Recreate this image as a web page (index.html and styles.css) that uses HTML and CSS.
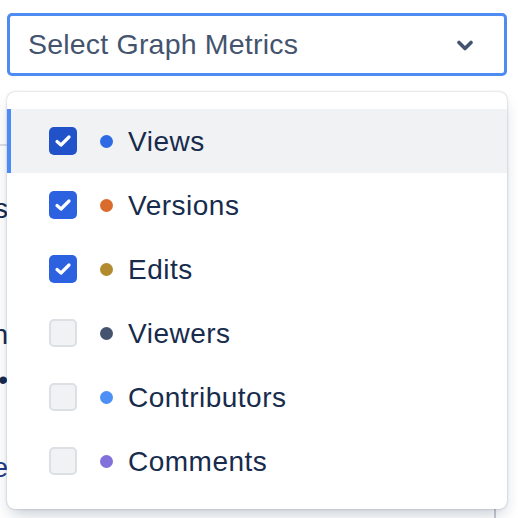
FILE: index.html
```html
<!DOCTYPE html>
<html>
<head>
<meta charset="utf-8">
<link rel="stylesheet" href="styles.css">
</head>
<body>
<div class="page">
  <div class="select">
    <span class="placeholder">Select Graph Metrics</span>
    <svg class="chevron" width="16" height="12" viewBox="0 0 16 12"><path d="M2 2.5 L8 8.5 L14 2.5" fill="none" stroke="#44546f" stroke-width="3.6" stroke-linecap="round" stroke-linejoin="round"/></svg>
  </div>

  <div class="backdrop">
    <div class="bd-head"></div>
    <div class="peek p1"><span>Statistics</span></div>
    <div class="peek p2"><span>Contents summary of con</span></div>
    <div class="peek p3"><span>•</span></div>
    <div class="peek p4"><span>Title</span></div>
  </div>

  <div class="menu">
    <div class="row active">
      <span class="cb on dark"><svg width="18" height="14" viewBox="0 0 18 14"><path d="M3 7.5 L7 11 L15 3" fill="none" stroke="#fff" stroke-width="3.2" stroke-linecap="round" stroke-linejoin="round"/></svg></span>
      <span class="dot" style="background:#2d6ae3"></span>
      <span class="label">Views</span>
    </div>
    <div class="row">
      <span class="cb on"><svg width="18" height="14" viewBox="0 0 18 14"><path d="M3 7.5 L7 11 L15 3" fill="none" stroke="#fff" stroke-width="3.2" stroke-linecap="round" stroke-linejoin="round"/></svg></span>
      <span class="dot" style="background:#d96c2d"></span>
      <span class="label">Versions</span>
    </div>
    <div class="row">
      <span class="cb on"><svg width="18" height="14" viewBox="0 0 18 14"><path d="M3 7.5 L7 11 L15 3" fill="none" stroke="#fff" stroke-width="3.2" stroke-linecap="round" stroke-linejoin="round"/></svg></span>
      <span class="dot" style="background:#b38b2f"></span>
      <span class="label">Edits</span>
    </div>
    <div class="row">
      <span class="cb"></span>
      <span class="dot" style="background:#44546f"></span>
      <span class="label">Viewers</span>
    </div>
    <div class="row">
      <span class="cb"></span>
      <span class="dot" style="background:#4c8ff5"></span>
      <span class="label">Contributors</span>
    </div>
    <div class="row">
      <span class="cb"></span>
      <span class="dot" style="background:#8270db"></span>
      <span class="label">Comments</span>
    </div>
  </div>
</div>
</body>
</html>
```

FILE: styles.css
```css
html, body {
  margin: 0;
  padding: 0;
  background: #ffffff;
}
body {
  width: 518px;
  height: 518px;
  overflow: hidden;
  font-family: "Liberation Sans", Arial, sans-serif;
}
.page {
  position: relative;
  height: 518px;
  padding: 13px 11px 0 7px;
  box-sizing: border-box;
}
.select {
  height: 63px;
  box-sizing: border-box;
  border: 3px solid #4f8cf2;
  border-radius: 5px;
  display: flex;
  align-items: center;
  justify-content: space-between;
  padding: 0 31px 0 18px;
  background: #fff;
}
.placeholder {
  font-size: 28.5px;
  color: #44546f;
  letter-spacing: 0.2px;
}
.chevron {
  display: block;
  margin-top: 2px;
}
.backdrop {
  margin-left: -7px;
  margin-top: 16px;
  width: 496px;
  height: 440px;
  border-right: 2px solid #c7cbd3;
  box-sizing: border-box;
  display: flex;
  flex-direction: column;
}
.bd-head {
  height: 52px;
  flex: none;
  border-bottom: 2px solid #dcdfe4;
  width: 100%;
}
.peek {
  width: 8px;
  overflow: hidden;
  display: flex;
  justify-content: flex-end;
  white-space: nowrap;
  font-size: 28px;
  line-height: 32px;
  color: #172b4d;
  flex: none;
}
.p1 { margin-top: 47px; }
.p2 { margin-top: 94px; }
.p3 { margin-top: 13px; }
.p4 { margin-top: 56px; color: #1d3b83; }

.menu {
  position: absolute;
  top: 92px;
  left: 7px;
  width: 500px;
  height: 417px;
  box-sizing: border-box;
  padding: 17px 0 16px;
  background: #fff;
  border-radius: 8px;
  box-shadow: 0 8px 16px -4px rgba(9, 30, 66, 0.25), 0 0 2px rgba(9, 30, 66, 0.31);
  display: flex;
  flex-direction: column;
}
.row {
  height: 64px;
  flex: none;
  display: flex;
  align-items: center;
  padding-left: 42px;
  box-sizing: border-box;
}
.row.active {
  background: #f1f2f4;
  box-shadow: inset 4px 0 0 #4c8bf5;
}
.cb {
  width: 28px;
  height: 28px;
  box-sizing: border-box;
  border-radius: 5px;
  background: #f1f2f4;
  border: 2.5px solid #dcdfe4;
  display: flex;
  align-items: center;
  justify-content: center;
  flex: none;
}
.cb.on {
  background: #2c62df;
  border: none;
}
.cb.on.dark {
  background: #2152c9;
}
.cb svg { display: block; }
.dot {
  width: 13px;
  height: 13px;
  border-radius: 50%;
  margin-left: 23px;
  flex: none;
}
.label {
  margin-left: 15px;
  margin-top: 2px;
  font-size: 28px;
  color: #172b4d;
  letter-spacing: 0.5px;
}
```
